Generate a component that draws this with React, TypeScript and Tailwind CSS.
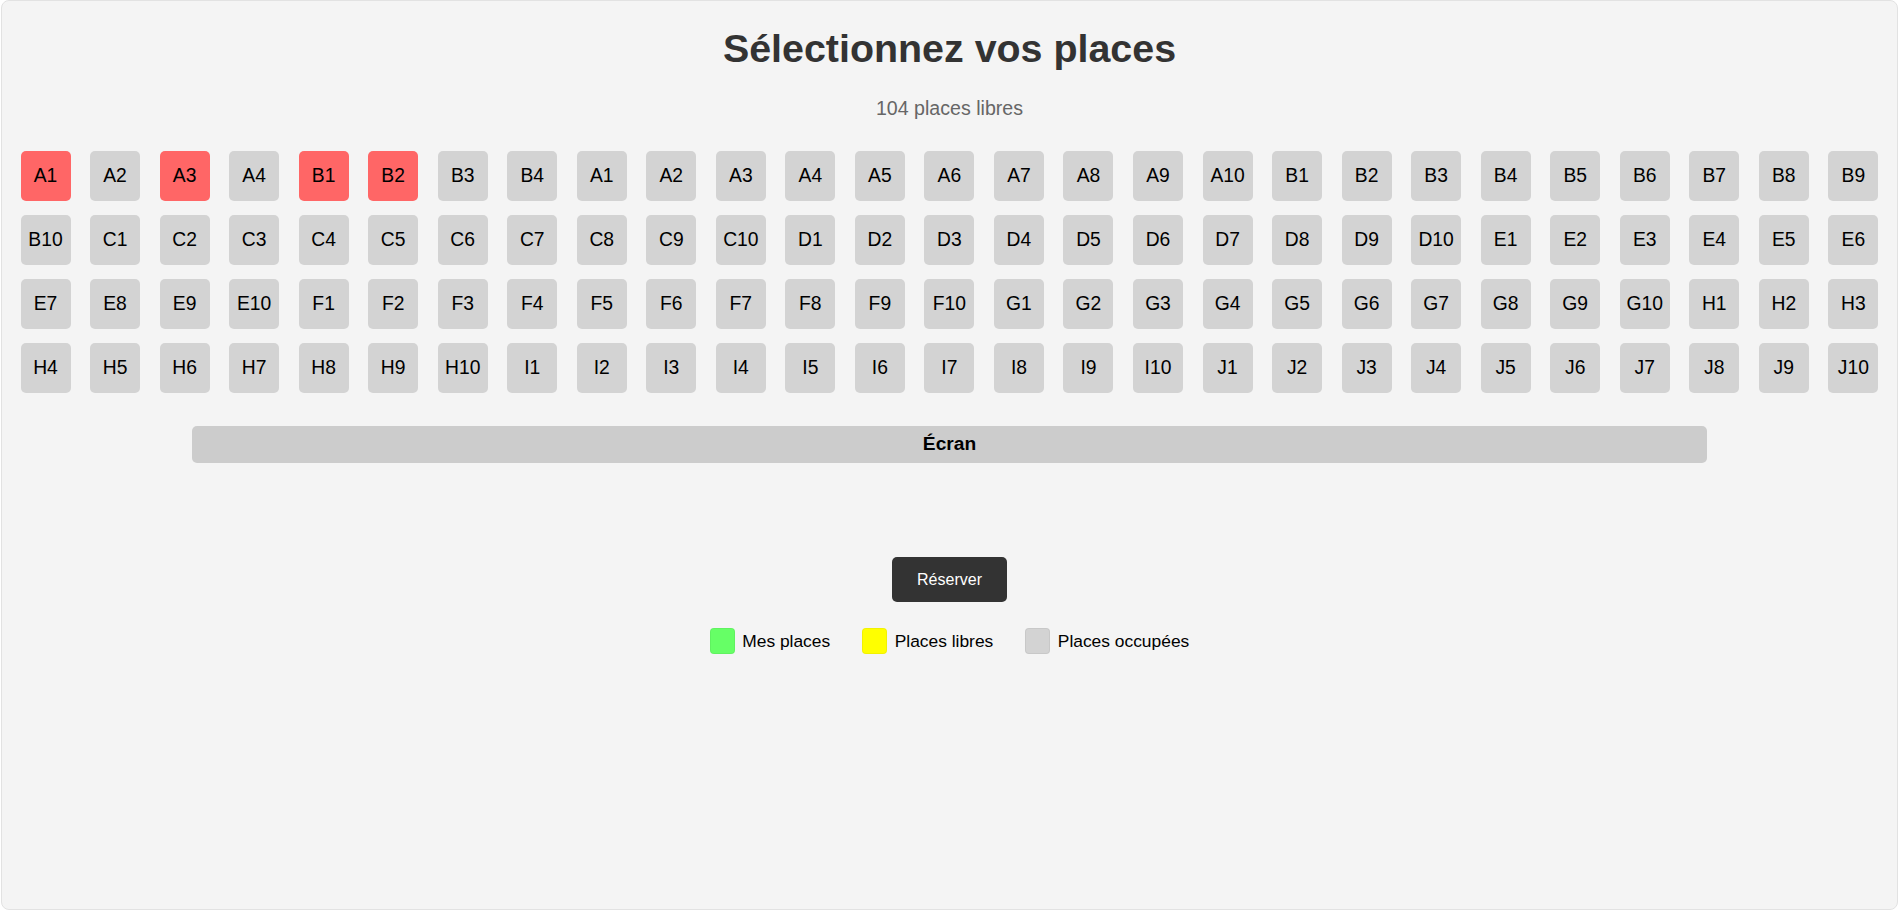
const taken = new Set([0, 2, 4, 5]);

const firstRow = ['A1', 'A2', 'A3', 'A4', 'B1', 'B2', 'B3', 'B4'];
const rows = ['A', 'B', 'C', 'D', 'E', 'F', 'G', 'H', 'I', 'J'];
const seats = [
  ...firstRow,
  ...rows.flatMap((r) => Array.from({ length: 10 }, (_, i) => `${r}${i + 1}`)),
];

const legend = [
  { label: 'Mes places', color: 'bg-[#66ff66]' },
  { label: 'Places libres', color: 'bg-[#ffff00]' },
  { label: 'Places occupées', color: 'bg-[#d3d3d3]' },
];

export default function App() {
  return (
    <div className="h-[910px] bg-white font-['Liberation_Sans',Arial,sans-serif]">
      <div className="ml-[1px] w-[1897px] h-[910px] bg-[#f4f4f4] border border-[#e2e2e2] rounded-lg flex flex-col items-center pt-[24px]">
        <h1 className="text-[39.4px] leading-[46px] font-bold text-[#333]">Sélectionnez vos places</h1>
        <p className="mt-[26px] text-[19.6px] leading-[23px] text-[#666]">104 places libres</p>

        <div className="mt-[31px] w-[1858px] grid grid-cols-[repeat(27,50px)] justify-between gap-y-[14px]">
          {seats.map((s, i) => (
            <div
              key={i}
              className={`h-[50px] rounded-[5px] flex items-center justify-center text-[19.3px] text-black ${
                taken.has(i) ? 'bg-[#ff6666]' : 'bg-[#d3d3d3]'
              }`}
            >
              {s}
            </div>
          ))}
        </div>

        <div className="mt-[33px] w-[1515px] h-[37px] rounded-[5px] bg-[#cccccc] flex items-center justify-center text-[19.2px] font-bold text-black">
          Écran
        </div>

        <button className="mt-[94px] h-[45px] px-[25px] rounded-[5px] bg-[#333] text-white text-[16px]">
          Réserver
        </button>

        <div className="mt-[26px] flex items-center gap-[32px]">
          {legend.map((l) => (
            <div key={l.label} className="flex items-center gap-[7.5px]">
              <div className={`w-[25px] h-[26px] rounded-[4px] border border-black/5 ${l.color}`} />
              <span className="text-[17.4px] text-black">{l.label}</span>
            </div>
          ))}
        </div>
      </div>
    </div>
  );
}
